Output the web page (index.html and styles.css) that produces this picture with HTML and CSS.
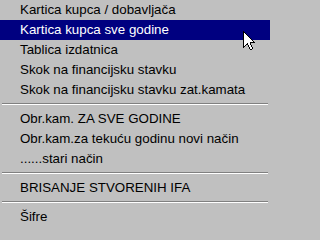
FILE: index.html
```html
<!DOCTYPE html>
<html>
<head>
<meta charset="utf-8">
<link rel="stylesheet" href="styles.css">
</head>
<body>
<div class="menu">
  <div class="item">Kartica kupca / dobavljača</div>
  <div class="item active">Kartica kupca sve godine</div>
  <div class="item">Tablica izdatnica</div>
  <div class="item">Skok na financijsku stavku</div>
  <div class="item">Skok na financijsku stavku zat.kamata</div>
  <div class="sep"></div>
  <div class="item">Obr.kam. ZA SVE GODINE</div>
  <div class="item">Obr.kam.za tekuću godinu novi način</div>
  <div class="item">......stari način</div>
  <div class="sep"></div>
  <div class="item">BRISANJE STVORENIH IFA</div>
  <div class="sep"></div>
  <div class="item">Šifre</div>
  <svg class="cursor" width="12" height="19" viewBox="0 0 12 19" shape-rendering="crispEdges">
    <g fill="#000">
      <rect x="0" y="0" width="1" height="17"/>
      <rect x="1" y="1" width="1" height="1"/>
      <rect x="2" y="2" width="1" height="1"/>
      <rect x="3" y="3" width="1" height="1"/>
      <rect x="4" y="4" width="1" height="1"/>
      <rect x="5" y="5" width="1" height="1"/>
      <rect x="6" y="6" width="1" height="1"/>
      <rect x="7" y="7" width="1" height="1"/>
      <rect x="8" y="8" width="1" height="1"/>
      <rect x="9" y="9" width="1" height="1"/>
      <rect x="10" y="10" width="1" height="1"/>
      <rect x="7" y="11" width="5" height="1"/>
      <rect x="4" y="12" width="1" height="1"/>
      <rect x="7" y="12" width="1" height="1"/>
      <rect x="3" y="13" width="2" height="1"/>
      <rect x="7" y="13" width="1" height="1"/>
      <rect x="2" y="14" width="1" height="1"/>
      <rect x="5" y="14" width="1" height="1"/>
      <rect x="8" y="14" width="1" height="1"/>
      <rect x="1" y="15" width="1" height="1"/>
      <rect x="5" y="15" width="1" height="1"/>
      <rect x="8" y="15" width="1" height="1"/>
      <rect x="6" y="16" width="1" height="1"/>
      <rect x="9" y="16" width="1" height="1"/>
      <rect x="6" y="17" width="1" height="1"/>
      <rect x="9" y="17" width="1" height="1"/>
      <rect x="7" y="18" width="2" height="1"/>
    </g>
    <g fill="#fff">
      <rect x="1" y="2" width="1" height="1"/>
      <rect x="1" y="3" width="2" height="1"/>
      <rect x="1" y="4" width="3" height="1"/>
      <rect x="1" y="5" width="4" height="1"/>
      <rect x="1" y="6" width="5" height="1"/>
      <rect x="1" y="7" width="6" height="1"/>
      <rect x="1" y="8" width="7" height="1"/>
      <rect x="1" y="9" width="8" height="1"/>
      <rect x="1" y="10" width="9" height="1"/>
      <rect x="1" y="11" width="6" height="1"/>
      <rect x="1" y="12" width="3" height="1"/>
      <rect x="5" y="12" width="2" height="1"/>
      <rect x="1" y="13" width="2" height="1"/>
      <rect x="5" y="13" width="2" height="1"/>
      <rect x="1" y="14" width="1" height="1"/>
      <rect x="6" y="14" width="2" height="1"/>
      <rect x="6" y="15" width="2" height="1"/>
      <rect x="7" y="16" width="2" height="1"/>
      <rect x="7" y="17" width="2" height="1"/>
    </g>
  </svg>
</div>
</body>
</html>
```

FILE: styles.css
```css
html, body {
  margin: 0;
  padding: 0;
  background: #c0c0c0;
}

.menu {
  position: relative;
  width: 270px;
  height: 227px;
  background: #c0c0c0;
  font-family: "Liberation Sans", Arial, sans-serif;
  font-size: 13.33px;
  color: #000;
  overflow: hidden;
}

.item {
  height: 20px;
  line-height: 20px;
  padding-left: 20px;
  white-space: nowrap;
}

.item.active {
  background: #000080;
  color: #fff;
}

.sep {
  height: 9px;
  margin: 0 2px;
  box-sizing: border-box;
  padding-top: 3px;
}

.sep::before {
  content: "";
  display: block;
  height: 1px;
  background: #808080;
  border-bottom: 1px solid #fff;
}

.cursor {
  position: absolute;
  left: 243px;
  top: 31px;
  display: block;
}
```
